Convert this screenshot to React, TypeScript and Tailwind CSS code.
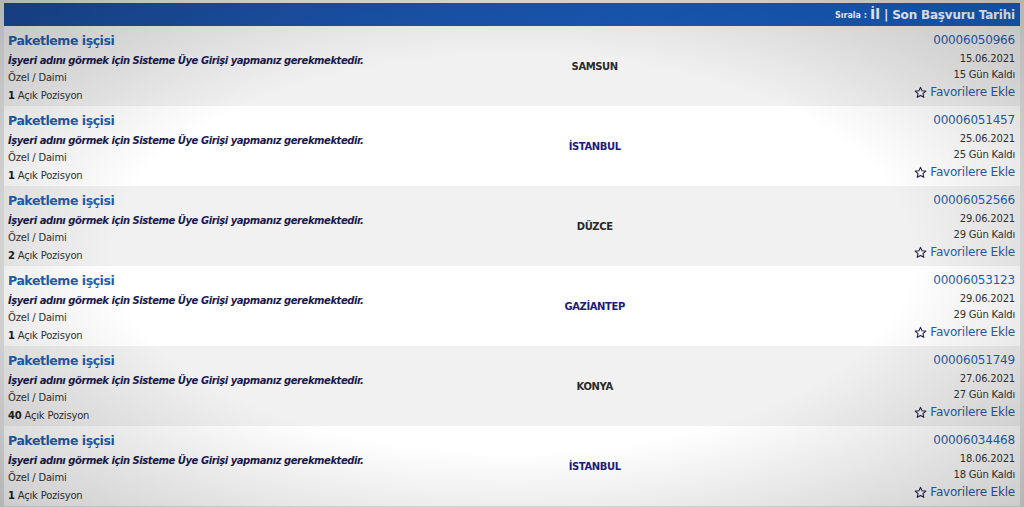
import React from "react";

const rows = [
  { no: "00006050966", date: "15.06.2021", left: "15", city: "SAMSUN", pos: "1" },
  { no: "00006051457", date: "25.06.2021", left: "25", city: "İSTANBUL", pos: "1" },
  { no: "00006052566", date: "29.06.2021", left: "29", city: "DÜZCE", pos: "2" },
  { no: "00006053123", date: "29.06.2021", left: "29", city: "GAZİANTEP", pos: "1" },
  { no: "00006051749", date: "27.06.2021", left: "27", city: "KONYA", pos: "40" },
  { no: "00006034468", date: "18.06.2021", left: "18", city: "İSTANBUL", pos: "1" },
];

function StarIcon() {
  return (
    <svg width="13" height="13" viewBox="0 0 24 24" fill="none" stroke="#1a1f4a" strokeWidth="2" strokeLinejoin="round">
      <path d="M12 2.5l2.9 6.3 6.9.7-5.2 4.6 1.5 6.8L12 17.4l-6.1 3.5 1.5-6.8L2.2 9.5l6.9-.7z" />
    </svg>
  );
}

export default function App() {
  return (
    <div
      className="relative w-[1024px] h-[507px] overflow-hidden bg-[#e2e2e2] px-[4px] pt-[3px]"
      style={{ fontFamily: "'DejaVu Sans', Verdana, sans-serif" }}
    >
      <div className="h-[23px] bg-gradient-to-r from-[#1b4c9c] to-[#1560c2] flex items-center justify-end pr-[5px] text-white font-bold">
        <span className="text-[8px] mr-[3px] mt-[3px]">Sırala :</span>
        <span className="text-[14px] mr-[4px]">İl</span>
        <span className="text-[12px] tracking-[-0.2px]">| Son Başvuru Tarihi</span>
      </div>
      {rows.map((r, i) => (
        <div
          key={i}
          className={`h-[80px] grid grid-cols-[1fr_auto] items-stretch ${i % 2 === 0 ? "bg-[#f1f1f1]" : "bg-white"}`}
        >
          <div className="relative flex">
            <div className="flex flex-col pl-[4px] pt-[6px]">
              <div className="text-[12.5px] font-bold text-[#1f5fb0] leading-[17px] tracking-[-0.45px]">Paketleme işçisi</div>
              <div className="text-[10px] font-bold italic text-[#1a1a4e] leading-[13px] mt-[5px] tracking-[-0.45px]">
                İşyeri adını görmek için Sisteme Üye Girişi yapmanız gerekmektedir.
              </div>
              <div className="text-[10px] text-[#333] leading-[13px] mt-[4px] tracking-[-0.2px]">Özel / Daimi</div>
              <div className="text-[10px] text-[#333] leading-[13px] mt-[5px] tracking-[-0.2px]">
                <span className="font-bold text-[#222]">{r.pos}</span> Açık Pozisyon
              </div>
            </div>
            <div className="flex-1 flex items-center justify-center pl-[6px]">
              <span
                className={`text-[10px] font-bold tracking-[-0.4px] ${i % 2 === 0 ? "text-[#2a2a2a]" : "text-[#1c1c7e]"}`}
              >
                {r.city}
              </span>
            </div>
          </div>
          <div className="flex flex-col items-end pr-[5px] pt-[6px] w-[200px]">
            <div className="text-[12px] text-[#1f5fb0] leading-[16px] tracking-[-0.2px]">{r.no}</div>
            <div className="text-[10px] text-[#333] leading-[13px] mt-[4px] tracking-[-0.2px]">{r.date}</div>
            <div className="text-[10px] text-[#333] leading-[13px] mt-[3px] tracking-[-0.2px]">{r.left} Gün Kaldı</div>
            <div className="flex items-center gap-[3px] mt-[3px]">
              <StarIcon />
              <span className="text-[12px] text-[#1f5fb0] leading-[16px] tracking-[-0.2px]">Favorilere Ekle</span>
            </div>
          </div>
        </div>
      ))}
      <div
        className="pointer-events-none absolute inset-0"
        style={{ background: "radial-gradient(ellipse at center, rgba(0,0,0,0) 55%, rgba(0,0,0,0.2) 100%)" }}
      />
    </div>
  );
}
